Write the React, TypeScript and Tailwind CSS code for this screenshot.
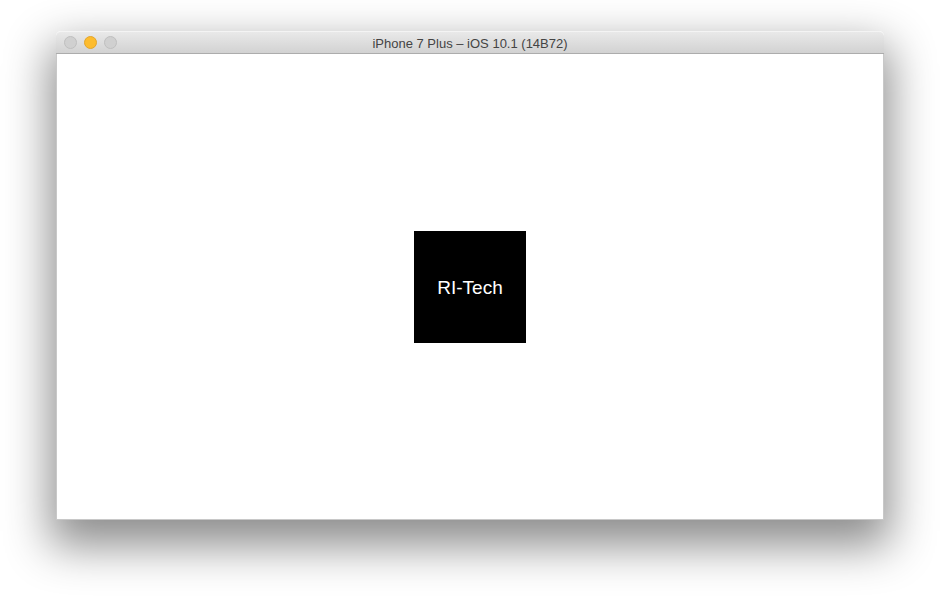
import React from "react";

export default function App() {
  return (
    <div className="w-[940px] h-[600px] bg-white pt-[31px] pl-[56px] font-['Liberation_Sans',Arial,sans-serif]">
      {/* Simulator window */}
      <div className="w-[828px] h-[489px] flex flex-col rounded-t-[5px] shadow-[0_20px_45px_6px_rgba(0,0,0,0.45)]">
        {/* Title bar */}
        <div className="relative h-[23px] flex items-center justify-center rounded-t-[5px] bg-gradient-to-b from-[#e9e9e9] to-[#d2d2d2] border-t border-[#f4f4f4] border-b border-b-[#acacac]">
          <div className="absolute left-[8px] top-[4px] flex gap-[7px]">
            <span className="w-[13px] h-[13px] rounded-full bg-[#d0d0d0] border border-[#bfbfbf]" />
            <span className="w-[13px] h-[13px] rounded-full bg-[#fdbc2e] border border-[#e3a52a]" />
            <span className="w-[13px] h-[13px] rounded-full bg-[#d0d0d0] border border-[#bfbfbf]" />
          </div>
          <span className="text-[13px] text-[#444] leading-none pt-[1px]">iPhone 7 Plus – iOS 10.1 (14B72)</span>
        </div>

        {/* Screen */}
        <div className="flex-1 bg-white border-x border-b border-[#c8c8c8] flex items-center justify-center">
          <div className="w-[112px] h-[112px] bg-black flex items-center justify-center pt-[3px]">
            <span className="text-white text-[19px] font-['Helvetica_Neue','Liberation_Sans',sans-serif]">RI-Tech</span>
          </div>
        </div>
      </div>
    </div>
  );
}
